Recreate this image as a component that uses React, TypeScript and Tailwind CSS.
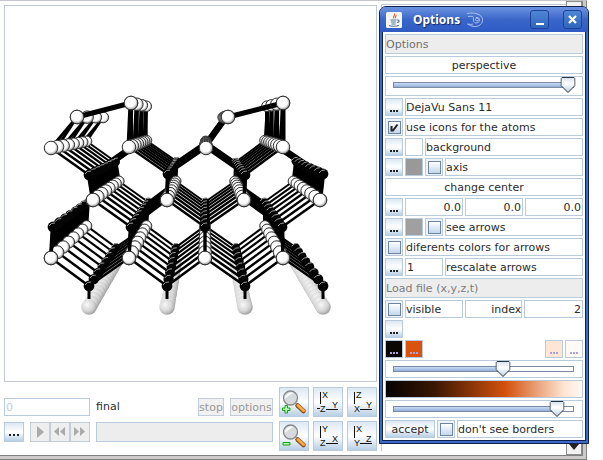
import { useState } from "react";
import type { ReactNode } from "react";

type Point = [number, number];

const VX = 205;
const VY = 119;

const scaleAt = (z: number) => 1 / (1 + 0.043 * z);
const project = ([x, y]: Point, z: number): Point => {
  const s = scaleAt(z);
  return [VX + (x - VX) * s, VY + (y - VY) * s];
};

const surface: Point[] = [[51, 148], [129, 147], [206, 148], [283, 147]];
const second: Point[] = [[89, 175], [168, 174], [245, 175], [323, 174]];
const third: Point[] = [[93, 200], [167, 200], [244, 200], [320, 200]];
const fourth: Point[] = [[53, 227], [131, 227], [205, 227], [282, 227]];
const fifth: Point[] = [[51, 258], [129, 258], [205, 258], [283, 258]];
const sixth: Point[] = [[89, 286], [167, 286], [245, 286], [323, 286]];
const hydrogens: Point[] = [[89, 307], [167, 307], [245, 307], [323, 307]];
const dimers: Point[] = [[77, 117], [131, 103], [228, 117], [283, 103]];

const rowBonds = (a: Point[], b: Point[], leftFirst: boolean): [Point, Point][] => {
  const list: [Point, Point][] = [];
  a.forEach((p, i) => {
    list.push([p, b[i]]);
    const j = leftFirst ? i - 1 : i + 1;
    if (b[j]) list.push([p, b[j]]);
  });
  return list;
};

const diagonals = [
  ...rowBonds(surface, second, true),
  ...rowBonds(third, fourth, false),
  ...rowBonds(fifth, sixth, true),
];
const uprights: [Point, Point][] = [0, 1, 2, 3].flatMap((i): [Point, Point][] => [
  [second[i], third[i]],
  [fourth[i], fifth[i]],
]);
const dimerLegs: [Point, Point][] = dimers.map((d, i) => [d, surface[i]]);
const dimerBars: [Point, Point][] = [
  [dimers[0], dimers[1]],
  [dimers[2], dimers[3]],
];

function Bond({ a, b, z, z2 = z, w = 3 }: { a: Point; b: Point; z: number; z2?: number; w?: number }) {
  const [x1, y1] = project(a, z);
  const [x2, y2] = project(b, z2);
  return <line x1={x1} y1={y1} x2={x2} y2={y2} stroke="#000" strokeWidth={w * scaleAt(z)} />;
}

function Atom({ p, z, kind }: { p: Point; z: number; kind: "white" | "black" | "gray" }) {
  const [x, y] = project(p, z);
  const s = scaleAt(z);
  if (kind === "black")
    return (
      <g>
        <circle cx={x} cy={y} r={5.4 * s} fill="#050505" />
        <path d={`M${x - 4} ${y - 1}Q${x - 2} ${y - 4.5} ${x + 2} ${y - 4}`} fill="none" stroke="#9a9a9a" strokeWidth="1" />
      </g>
    );
  if (kind === "gray") return <circle cx={x} cy={y} r={7.8 * s} fill="url(#hydrogen)" />;
  return <circle cx={x} cy={y} r={6.8 * s} fill="url(#silicon)" stroke="#333" strokeWidth="1" />;
}

const depth = [7, 6, 5, 4, 3, 2, 1, 0];

function Crystal() {
  return (
    <svg viewBox="5 6 371 375" className="block h-[375px] w-full" role="img" aria-label="crystal">
      <defs>
        <radialGradient id="silicon" cx="0.46" cy="0.44" r="0.58">
          <stop offset="0.6" stopColor="#fff" />
          <stop offset="1" stopColor="#808080" />
        </radialGradient>
        <radialGradient id="hydrogen" cx="0.38" cy="0.35" r="0.7">
          <stop offset="0" stopColor="#f8f8f8" />
          <stop offset="0.6" stopColor="#d4d4d4" />
          <stop offset="1" stopColor="#999" />
        </radialGradient>
      </defs>
      {depth.map((z) => (
        <g key={z}>
          {hydrogens.map((p, i) => (
            <g key={i}>
              {z < 7 && <Atom p={p} z={z + 0.5} kind="gray" />}
              <Atom p={p} z={z} kind="gray" />
            </g>
          ))}
        </g>
      ))}
      {hydrogens.map((p, i) => (
        <Bond key={i} a={sixth[i]} b={[p[0], 299]} z={0} w={3} />
      ))}
      {depth.map((z) => (
        <g key={z}>
          {uprights.map(([a, b], i) => (
            <g key={i}>
              {z < 7 && <Bond a={a} b={b} z={z + 0.5} w={4.4} />}
              <Bond a={a} b={b} z={z} w={4.4} />
            </g>
          ))}
          {diagonals.map(([a, b], i) => (
            <Bond key={i} a={a} b={b} z={z} w={2.6} />
          ))}
        </g>
      ))}
      {depth.map((z) => (
        <g key={z}>
          {[...third, ...fifth].map((p, i) => (
            <Atom key={i} p={p} z={z} kind="white" />
          ))}
          {[...sixth, ...fourth, ...second].map((p, i) => (
            <Atom key={i} p={p} z={z} kind="black" />
          ))}
        </g>
      ))}
      {uprights.map(([a, b], i) => (
        <Bond key={i} a={a} b={b} z={0} w={3.4} />
      ))}
      {[...third, ...fifth].map((p, i) => (
        <Atom key={i} p={p} z={0} kind="white" />
      ))}
      {[6, 4, 2, 0].map((z) => (
        <g key={z}>
          {dimerLegs.map(([a, b], i) => (
            <g key={i}>
              <Bond a={a} b={b} z={z} w={i === 1 || i === 3 ? 5 : 3} />
              <Bond a={a} b={b} z={z} z2={z + 1} w={3} />
            </g>
          ))}
        </g>
      ))}
      {depth.map((z) => (
        <g key={z}>
          {surface.map((p, i) => (
            <Atom key={i} p={p} z={z} kind="white" />
          ))}
          {z % 2 === 0 && dimers.map((p, i) => z < 7 && <Atom key={i} p={p} z={z} kind="white" />)}
        </g>
      ))}
      {dimerBars.map(([a, b], i) => (
        <g key={i}>
          <Bond a={a} b={b} z={0} w={5} />
          <Atom p={a} z={0} kind="white" />
          <Atom p={b} z={0} kind="white" />
        </g>
      ))}
    </svg>
  );
}

const cell = "h-[18px] border border-[#b8cbdd] bg-white leading-[18px]";
const metal = "bg-linear-to-b from-[#dde8f3] via-white to-[#b8cfe5]";

function Row({ children }: { children: ReactNode }) {
  return <div className="flex gap-[2px]">{children}</div>;
}

function Dots({ label }: { label: string }) {
  return (
    <button
      aria-label={label}
      className={`flex h-[18px] w-[18px] shrink-0 items-end justify-center gap-px border border-[#b8cbdd] pb-[3px] ${metal}`}
    >
      <Dot /><Dot /><Dot />
    </button>
  );
}

function Dot({ color = "bg-[#222]" }: { color?: string }) {
  return <span className={`h-[2px] w-[2px] ${color}`} />;
}

function Tick({ id, on = false }: { id: string; on?: boolean }) {
  return (
    <span className="grid h-[18px] w-[18px] shrink-0 place-items-center border border-[#b8cbdd] bg-[#eef3f8]">
      <input
        id={id}
        type="checkbox"
        defaultChecked={on}
        className="peer col-start-1 row-start-1 h-[13px] w-[13px] appearance-none border border-[#6f84a0] bg-linear-to-b from-white to-[#c3d7ec]"
      />
      <svg viewBox="0 0 13 13" className="pointer-events-none col-start-1 row-start-1 hidden h-[13px] w-[13px] peer-checked:block">
        <path d="M3.5 5v4.5h1.5L9.5 3.5" fill="none" stroke="#222" strokeWidth="2" />
      </svg>
    </span>
  );
}

function TickLabel({ id, children }: { id: string; children: ReactNode }) {
  return <label htmlFor={id} className={`${cell} min-w-0 flex-1 whitespace-nowrap`}>{children}</label>;
}

function Slider({ label, start, tall = false }: { label: string; start: number; tall?: boolean }) {
  const [value, setValue] = useState(start);
  return (
    <div className={`flex items-center border border-[#b8cbdd] bg-white pl-[7px] pr-2 ${tall ? "h-5 pb-[2px]" : "h-[18px]"}`}>
      <div className="relative h-[6px] flex-1 border border-[#7a8aa5] bg-white">
        <div className="h-full bg-linear-to-b from-[#c9dcf5] to-[#92afd9]" style={{ width: `${value}%` }} />
        <svg
          viewBox="0 0 15 16"
          className="absolute -top-[6px] h-4 w-[15px] -translate-x-1/2"
          style={{ left: `${value}%` }}
        >
          <path d="M.5 1.5l1-1h12l1 1v7l-7 7-7-7z" fill="url(#knob)" stroke="#27313f" />
          <defs>
            <linearGradient id="knob" x1="0" y1="0" x2="0" y2="1">
              <stop offset="0" stopColor="#d5e2f0" />
              <stop offset="0.4" stopColor="#fff" />
              <stop offset="1" stopColor="#b8cfe5" />
            </linearGradient>
          </defs>
        </svg>
        <input
          type="range"
          aria-label={label}
          value={value}
          onChange={(e) => setValue(Number(e.target.value))}
          className="absolute -top-[6px] left-0 h-4 w-full opacity-0"
        />
      </div>
    </div>
  );
}

function NumberBox({ label, value }: { label: string; value: string }) {
  return <input aria-label={label} defaultValue={value} className={`${cell} w-0 min-w-0 flex-1 pr-px pt-px text-right`} />;
}

function ColorButton({ label, color }: { label: string; color: string }) {
  return (
    <button aria-label={label} className={`flex h-[18px] w-[18px] items-end justify-center gap-px border border-[#b8cbdd] pb-[3px] ${color}`}>
      <Dot color="bg-[#a9a0dc]" /><Dot color="bg-[#a9a0dc]" /><Dot color="bg-[#a9a0dc]" />
    </button>
  );
}

function TitleBar() {
  return (
    <header className="flex h-[25px] items-center rounded-t-[5px] bg-linear-to-b from-[#6d93e0] via-[#3a66c9] to-[#2e5cc4] pl-[6px] pr-[6px]">
      <svg viewBox="0 0 16 16" className="h-4 w-4">
        <rect width="16" height="16" rx="1.5" fill="#f4f4f2" />
        <path d="M8.5 1.5c1.5 2-2.5 2.5-.6 5M10.5 3.5c-1.5 1-1.5 1.5-.6 2.8" fill="none" stroke="#e0662a" strokeWidth="1.1" />
        <path d="M4.5 8h6M5 10h5M5.5 12h4M3 13.5c2 1 8 1 10-.3M11 8c3-.3 2.500 2.500 0 2.500" fill="none" stroke="#55789c" strokeWidth="1.1" />
      </svg>
      <h1 className="ml-[11px] font-['Noto_Sans',sans-serif] text-xs font-bold text-white [text-shadow:1px_1px_1px_#132a63]">Options</h1>
      <svg viewBox="0 0 18 18" className="ml-[6px] h-[18px] w-[18px]" fill="none" stroke="#a9bfee" strokeWidth="1">
        <path d="M1 2.500C8 1 15.500 3 16.500 8c.5 5-4 8-8.500 7.500-3-.3-4.500-1.500-6.500-2.500 3 .5 4 .5 5.500 0" />
        <path d="M2 5.500c5-.5 6 0 5.500 2.500-1 3 2 5 4.500 3.500 3-2 1.500-5.500-2-5" />
        <circle cx="11" cy="8.500" r="1.500" />
      </svg>
      <div className="ml-auto flex gap-[14px]">
        <button aria-label="minimize" className="flex h-[19px] w-[19px] items-end justify-center rounded-[3px] border border-[#1f439a] bg-linear-to-b from-[#4f86d4] to-[#2f66bd] pb-[3px]">
          <span className="h-[2px] w-2 bg-white" />
        </button>
        <button aria-label="close" className="grid h-[19px] w-[19px] place-items-center rounded-[3px] border border-[#1f439a] bg-linear-to-b from-[#4f86d4] to-[#2f66bd]">
          <svg viewBox="0 0 9 9" className="h-[9px] w-[9px]" stroke="#fff" strokeWidth="2.2">
            <path d="M1 1l7 7M8 1L1 8" />
          </svg>
        </button>
      </div>
    </header>
  );
}

function OptionsWindow() {
  return (
    <section className="absolute right-[14px] top-[6px] w-[210px] rounded-t-[7px] border border-[#10204f] bg-[#3a6ac6]">
      <TitleBar />
      <div className="mx-[2px] mb-[2px] flex flex-col gap-[2px] border-x border-b border-[#10204f] bg-white p-[2px]">
        <div className="h-5 border border-[#b8cbdd] bg-[#ededed] leading-5 text-[#6e6e6e]">Options</div>
        <div className={`${cell} text-center`}>perspective</div>
        <Slider label="perspective" start={97} tall />
        <Row><Dots label="font" /><div className={`${cell} flex-1`}>DejaVu Sans 11</div></Row>
        <Row><Tick id="icons" on /><TickLabel id="icons">use icons for the atoms</TickLabel></Row>
        <Row><Dots label="background color" /><div className={`${cell} w-[18px]`} /><div className={`${cell} flex-1`}>background</div></Row>
        <Row>
          <Dots label="axis color" />
          <div className="h-[18px] w-[18px] border border-[#b8cbdd] bg-[#999]" />
          <Tick id="axis" /><TickLabel id="axis">axis</TickLabel>
        </Row>
        <div className={`${cell} text-center`}>change center</div>
        <Row>
          <Dots label="center" />
          <NumberBox label="center x" value="0.0" /><NumberBox label="center y" value="0.0" /><NumberBox label="center z" value="0.0" />
        </Row>
        <Row>
          <Dots label="arrow color" />
          <div className="h-[18px] w-[18px] border border-[#b8cbdd] bg-[#a0a0a0]" />
          <Tick id="arrows" /><TickLabel id="arrows">see arrows</TickLabel>
        </Row>
        <Row><Tick id="colors" /><TickLabel id="colors">diferents colors for arrows</TickLabel></Row>
        <Row>
          <Dots label="arrow scale" />
          <input id="scale" defaultValue="1" className={`${cell} w-[38px] pl-px pt-px`} />
          <label htmlFor="scale" className={`${cell} flex-1`}>rescalate arrows</label>
        </Row>
        <div className="h-5 border border-[#b8cbdd] bg-[#ededed] leading-5 text-[#7c7c7c]">Load file (x,y,z,t)</div>
        <Row>
          <Tick id="visible" /><TickLabel id="visible">visible</TickLabel>
          <label htmlFor="index" className={`${cell} w-0 flex-1 text-right`}>index</label>
          <input id="index" defaultValue="2" className={`${cell} w-0 min-w-0 flex-1 pr-px pt-px text-right`} />
        </Row>
        <Row><Dots label="load file" /></Row>
        <Row>
          <ColorButton label="first color" color="bg-[#0a0603]" />
          <ColorButton label="second color" color="bg-[#d9530c]" />
          <span className="flex-1" />
          <ColorButton label="third color" color="bg-[#fde6d4]" />
          <ColorButton label="fourth color" color="bg-[#fffaf6]" />
        </Row>
        <Slider label="color position" start={61} />
        <div className="h-[18px] border border-[#b8cbdd] bg-[linear-gradient(to_right,#050100_0%,#3a1704_25%,#d4510c_61%,#fde6d4_91%,#fff8f2_100%)]" />
        <Slider label="light position" start={91} />
        <Row>
          <button className={`h-[18px] w-[50px] border border-[#b8cbdd] leading-[18px] ${metal}`}>accept</button>
          <Tick id="borders" /><TickLabel id="borders">don't see borders</TickLabel>
        </Row>
      </div>
    </section>
  );
}

function Lens({ plus }: { plus: boolean }) {
  return (
    <svg viewBox="0 0 28 28" className="h-7 w-7">
      <path d="M17.500 17.500l6 5.500" stroke="#8a4f18" strokeWidth="4.500" strokeLinecap="round" />
      <path d="M18 17.500l5.500 5" stroke="#f6a94a" strokeWidth="3" strokeLinecap="round" />
      <circle cx="10.500" cy="10" r="7" fill="#d5dadd" stroke="#85888c" strokeWidth="1.3" />
      <path d="M4.500 11c1-5 6-7.500 9-6-3 1-6 3.500-9 6z" fill="#fff" />
      {plus ? (
        <path d="M5 17.500h2.500V20H10v2.500H7.500V25H5v-2.500H2.500V20H5z" fill="#b6ffb0" stroke="#14a514" />
      ) : (
        <path d="M3 20.500h7v2.500H3z" fill="#b6ffb0" stroke="#14a514" />
      )}
    </svg>
  );
}

function Axes({ up, corner, right, minus = false }: { up: string; corner: string; right: string; minus?: boolean }) {
  return (
    <svg viewBox="0 0 28 28" className="h-7 w-7 font-['Liberation_Sans',sans-serif] text-[9px]" fill="#111">
      <path d={`M6.500 4v12M12 21.500h12${minus ? "M3 20.500h3" : ""}`} stroke="#111" fill="none" />
      <text x="8" y="10">{up}</text>
      <text x="6" y="24">{corner}</text>
      <text x="18" y="20">{right}</text>
    </svg>
  );
}

const tools: { name: string; icon: ReactNode }[] = [
  { name: "zoom in", icon: <Lens plus /> },
  { name: "view X Y -Z", icon: <Axes up="X" corner="Z" right="Y" minus /> },
  { name: "view Z Y X", icon: <Axes up="Z" corner="X" right="Y" /> },
  { name: "zoom out", icon: <Lens plus={false} /> },
  { name: "view Y X Z", icon: <Axes up="Y" corner="Z" right="X" /> },
  { name: "view X Z Y", icon: <Axes up="X" corner="Y" right="Z" /> },
];

const players = [
  { name: "play", d: "M7 4l7 6-7 6z" },
  { name: "rewind", d: "M9 5v9L4 9.5zM15 5v9l-5-4.5z" },
  { name: "forward", d: "M4 5v9l5-4.5zM10 5v9l5-4.5z" },
];

function Controls() {
  const off = "h-[18px] border border-[#c3cddb] bg-[#f1f1f1] leading-[18px] text-[#999]";
  return (
    <div className="flex gap-[6px] pt-[5px]">
      <div className="flex min-w-0 flex-1 flex-col gap-[6px] pt-[11px]">
        <div className="flex items-center gap-[6px]">
          <input id="final" defaultValue="0" className="h-[18px] w-[86px] border border-[#b8cbdd] bg-white pl-px text-[#b8cfe5]" />
          <label htmlFor="final" className="flex-1 leading-[18px]">final</label>
          <button disabled className={`${off} w-[26px]`}>stop</button>
          <button disabled className={`${off} w-[43px]`}>options</button>
        </div>
        <div className="flex items-center gap-[6px]">
          <button aria-label="file" className={`flex h-5 w-5 items-end justify-center gap-[2px] border border-[#b8cbdd] pb-[5px] ${metal}`}>
            <Dot /><Dot /><Dot />
          </button>
          <div className="flex">
            {players.map((p) => (
              <button key={p.name} disabled aria-label={p.name} className="h-5 w-5 border border-[#c3cddb] bg-[#eee]">
                <svg viewBox="1 1 18 18" className="h-[18px] w-[18px]" fill="#aaa"><path d={p.d} /></svg>
              </button>
            ))}
          </div>
          <div className="h-5 flex-1 border border-[#b8cbdd] bg-[#ededed]" />
        </div>
      </div>
      <div className="grid grid-cols-3 gap-1">
        {tools.map((t) => (
          <button key={t.name} aria-label={t.name} className={`h-[30px] w-[30px] border border-[#b8cbdd] ${metal}`}>{t.icon}</button>
        ))}
      </div>
    </div>
  );
}

function ScrollArrow({ down = false }: { down?: boolean }) {
  return (
    <button aria-label={down ? "scroll down" : "scroll up"} className="grid h-4 w-4 place-items-center border border-[#8c8c8c] bg-[#f2f2f2]">
      <svg viewBox="0 0 10 6" className="h-[6px] w-[10px]" fill="#222">
        <path d={down ? "M0 0h10L5 6z" : "M0 6h10L5 0z"} />
      </svg>
    </button>
  );
}

export default function App() {
  return (
    <div className="relative bg-white pr-4 font-['DejaVu_Sans',sans-serif] text-[11px] text-[#2b2b2b]">
      <div className="border-b border-r border-t border-b-[#808080] border-r-[#808080] border-t-[#c4c4cc]">
        <div className="flex border-b-[3px] border-r-[3px] border-[#cdcbc8]">
          <main className="min-w-0 flex-1 border-b border-[#808080] pb-1 pl-1 pt-1">
            <div className="border border-[#c0c8d4]"><Crystal /></div>
            <Controls />
          </main>
          <aside className="flex w-[206px] shrink-0 border-b border-r border-[#808080] pl-1">
            <div className="mb-1 mt-[3px] flex-1 border-l border-t border-[#c0c8d4]" />
            <div className="flex flex-col justify-between">
              <ScrollArrow />
              <ScrollArrow down />
            </div>
          </aside>
        </div>
      </div>
      <OptionsWindow />
    </div>
  );
}
